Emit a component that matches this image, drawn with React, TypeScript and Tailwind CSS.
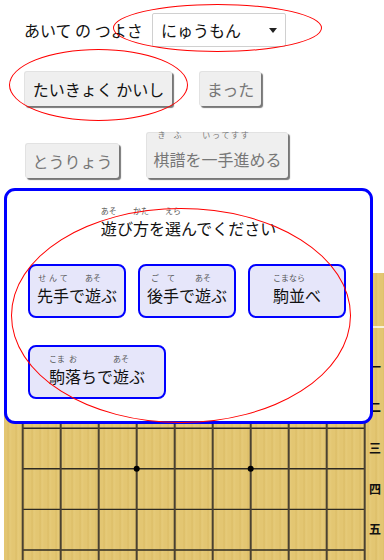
import React from "react";

const btn =
  "bg-[#efefef] rounded-[3px] shadow-[2px_2px_1px_#777777] border-t border-l border-[#e2e2e2] text-[16px] leading-none flex items-center justify-center shrink-0";
const modeBtn =
  "h-[54px] border-2 border-[#0000ff] rounded-[8px] bg-[#e6e6fa] text-[16px] leading-none flex items-center justify-center text-[#111] pb-[5px]";

function R({ b, t, rtClass = "mb-[5px] text-[#555]" }: { b: string; t: string; rtClass?: string }) {
  return (
    <span className="inline-block text-center align-baseline">
      <span className={"flex justify-around text-[8px] leading-none " + rtClass}>
        {t.split("").map((c, i) => (
          <span key={i}>{c}</span>
        ))}
      </span>
      <span className="block">{b}</span>
    </span>
  );
}

function Board() {
  const xs = Array.from({ length: 10 }, (_, k) => 18.7 + 38 * k);
  const ys = Array.from({ length: 6 }, (_, k) => 74 + 40.6 * k);
  const labels = ["一", "二", "三", "四", "五"];
  return (
    <svg width="380" height="287" viewBox="0 0 380 287" className="block">
      <line x1="369" y1="54" x2="380" y2="54" stroke="#ffffff" strokeWidth="1.5" />
      {ys.map((y, i) => (
        <line key={"h" + i} x1={18.7} y1={y} x2={360.7} y2={y} stroke="#2e2a22" strokeWidth="1.4" />
      ))}
      {xs.map((x, i) => (
        <line key={"v" + i} x1={x} y1={74} x2={x} y2={287} stroke="#4a4131" strokeWidth="2" />
      ))}
      <circle cx={132.7} cy={195.8} r="3" fill="#000" />
      <circle cx={246.7} cy={195.8} r="3" fill="#000" />
      {labels.map((l, i) => (
        <text
          key={l}
          x={371}
          y={94.3 + 40.6 * i + 4.5}
          textAnchor="middle"
          fontSize="12"
          fontWeight="bold"
          fill="#111"
          fontFamily="'Noto Sans CJK JP', sans-serif"
        >
          {l}
        </text>
      ))}
    </svg>
  );
}

export default function App() {
  return (
    <div className="relative w-[384px] h-[560px] overflow-hidden bg-white text-[#111] font-['Noto_Sans_CJK_JP','Liberation_Sans',sans-serif]">
      {/* strength row */}
      <div className="flex items-center pl-[24px] pt-[13px] h-[47px]">
        <span className="w-[128px] text-[16px] leading-none whitespace-nowrap">あいて の つよさ</span>
        <div className="w-[134px] h-[34px] border border-[#d0d0d0] rounded-[2px] bg-white flex items-center justify-between pl-[8px] pr-[6px]">
          <span className="text-[16px] leading-none">にゅうもん</span>
          <svg width="8" height="5" viewBox="0 0 8 5" className="mr-[2px]">
            <path d="M0 0 L8 0 L4 5 Z" fill="#222" />
          </svg>
        </div>
      </div>

      {/* row 2 */}
      <div className="flex gap-[27px] pl-[24px] mt-[24px]">
        <div className={btn + " w-[148px] h-[35px] text-[#111]"}>たいきょく かいし</div>
        <div className={btn + " w-[62px] h-[35px] text-[#777]"}>まった</div>
      </div>

      {/* row 3 */}
      <div className="flex items-end gap-[27px] pl-[25px] mt-[26px]">
        <div className={btn + " w-[94px] h-[35px] text-[#777]"}>とうりょう</div>
        <div className={btn + " w-[142px] h-[46px] text-[#777] items-end pb-[11px]"}>
          <span className="whitespace-nowrap">
            <R b="棋譜" t="きふ" rtClass="mb-[12px] text-[#777]" />を
            <R b="一手進" t="いってすす" rtClass="mb-[12px] text-[#777]" />める
          </span>
        </div>
      </div>

      {/* board */}
      <div className="mt-[95px] ml-[4px] h-[287px] bg-[#e2c570] bg-[repeating-linear-gradient(90deg,#e3c672_0px,#e3c672_3px,#dcbd66_4px,#e6cb7a_6px,#e3c672_8px)]">
        <Board />
      </div>

      {/* dialog */}
      <div className="absolute left-[4px] top-[188px] w-[369px] h-[236px] border-[3px] border-[#0000ff] rounded-[11px] bg-white">
        <div className="text-center text-[16px] leading-none mt-[16px] text-[#111] whitespace-nowrap">
          <R b="遊" t="あそ" />び<R b="方" t="かた" />を<R b="選" t="えら" />んでください
        </div>
        <div className="flex flex-wrap gap-x-[12px] gap-y-[27px] pl-[21px] mt-[28px]">
          <div className={modeBtn + " w-[98px]"}>
            <span className="whitespace-nowrap">
              <R b="先手" t="せんて" />で<R b="遊" t="あそ" />ぶ
            </span>
          </div>
          <div className={modeBtn + " w-[98px]"}>
            <span className="whitespace-nowrap">
              <R b="後手" t="ごて" />で<R b="遊" t="あそ" />ぶ
            </span>
          </div>
          <div className={modeBtn + " w-[98px]"}>
            <span className="whitespace-nowrap">
              <R b="駒並" t="こまなら" />べ
            </span>
          </div>
          <div className={modeBtn + " w-[138px]"}>
            <span className="whitespace-nowrap">
              <R b="駒" t="こま" />
              <R b="落" t="お" />ちで<R b="遊" t="あそ" />ぶ
            </span>
          </div>
        </div>
      </div>

      {/* annotation ellipses */}
      <div className="absolute left-[113px] top-[4px] w-[209px] h-[48px] rounded-[50%] border border-[#ff0000] pointer-events-none" />
      <div className="absolute left-[9px] top-[49px] w-[179px] h-[72px] rounded-[50%] border border-[#ff0000] pointer-events-none" />
      <div className="absolute left-[11px] top-[208px] w-[340px] h-[215px] rounded-[50%] border border-[#ff0000] pointer-events-none" />
    </div>
  );
}
